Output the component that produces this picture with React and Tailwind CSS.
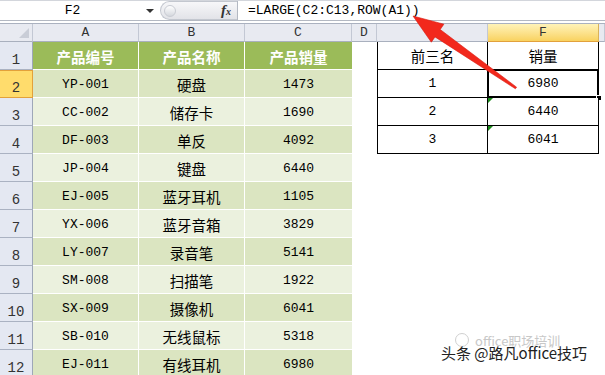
import React from "react";

const data = [
  ["YP-001", "硬盘", "1473"],
  ["CC-002", "储存卡", "1690"],
  ["DF-003", "单反", "4092"],
  ["JP-004", "键盘", "6440"],
  ["EJ-005", "蓝牙耳机", "1105"],
  ["YX-006", "蓝牙音箱", "3829"],
  ["LY-007", "录音笔", "5141"],
  ["SM-008", "扫描笔", "1922"],
  ["SX-009", "摄像机", "6041"],
  ["SB-010", "无线鼠标", "5318"],
  ["EJ-011", "有线耳机", "6980"],
];

const right = [
  ["前三名", "销量"],
  ["1", "6980"],
  ["2", "6440"],
  ["3", "6041"],
];

const isCJK = (s) => /[\u4e00-\u9fff]/.test(s);

function Txt({ children, bold, white }) {
  const cjk = isCJK(children);
  return (
    <span
      className={
        (cjk
          ? "font-['Noto_Sans_CJK_SC',sans-serif] text-[14.5px] leading-[18px] "
          : "font-['Liberation_Mono',monospace] text-[13px] leading-[16px] ") +
        (bold ? "font-bold " : "") +
        (white ? "text-white" : "text-black")
      }
    >
      {children}
    </span>
  );
}

function ColHead({ label, selected }) {
  return (
    <div
      className={
        "flex items-center justify-center border-r border-b text-[13px] leading-none text-[#333] " +
        (selected
          ? "bg-gradient-to-b from-[#fff3b8] to-[#f9d25e] border-b-[#e2a13c] border-r-[#d9b25a]"
          : "bg-[#e8eaf1] border-r-[#c3c8d4] border-b-[#a9b0be]")
      }
    >
      {label}
    </div>
  );
}

function RowHead({ n, selected }) {
  return (
    <div
      className={
        "flex items-end justify-center text-[14px] leading-[17px] text-[#333] border-b border-r " +
        (selected
          ? "bg-[#ffdc6c] border-[#e3a13a] border-t border-t-[#e3a13a]"
          : "bg-[#e4e8f2] border-b-[#aab2c2] border-r-[#9ea7b8]")
      }
    >
      {n}
    </div>
  );
}

export default function App() {
  const cells = [];
  // header row
  cells.push(
    <div key="corner" className="relative bg-[#e8eaf1] border-r border-b border-r-[#c3c8d4] border-b-[#a9b0be]">
      <svg className="absolute right-[3px] bottom-[3px]" width="10" height="10">
        <polygon points="10,0 10,10 0,10" fill="#c9cdd7" />
      </svg>
    </div>
  );
  ["A", "B", "C", "D", "E", "F"].forEach((l) =>
    cells.push(<ColHead key={"h" + l} label={l} selected={l === "F"} />)
  );
  cells.push(<ColHead key="hG" label="" />);

  for (let r = 1; r <= 12; r++) {
    cells.push(<RowHead key={"r" + r} n={r} selected={r === 2} />);
    const vals = r === 1 ? ["产品编号", "产品名称", "产品销量"] : data[r - 2];
    vals.forEach((v, i) => {
      const bg = r === 1 ? "bg-[#9bbb59]" : r % 2 === 0 ? "bg-[#dbe5c1]" : "bg-[#ebf1de]";
      cells.push(
        <div
          key={r + "-" + i}
          className={
            "flex items-center justify-center pt-[2px] border-b border-white " +
            (i < 2 ? "border-r " : "") +
            bg
          }
        >
          <Txt bold={r === 1} white={r === 1}>
            {v}
          </Txt>
        </div>
      );
    });
    cells.push(<div key={"d" + r} className="bg-white" />);
    if (r <= 4) {
      const rv = right[r - 1];
      cells.push(
        <div
          key={"e" + r}
          className="flex items-center justify-center pt-[1px] border-l border-r border-b border-black bg-white"
        >
          <Txt>{rv[0]}</Txt>
        </div>
      );
      cells.push(
        <div
          key={"f" + r}
          className="relative flex items-center justify-center pt-[1px] border-r border-b border-black bg-white"
        >
          <Txt>{rv[1]}</Txt>
          {r === 2 && (
            <>
              <div className="absolute left-[-1px] top-[-1px] right-[-1px] bottom-[-1px] border-2 border-black" />
              <div className="absolute right-[-4px] bottom-[-4px] h-[6px] w-[6px] bg-black border border-white" />
            </>
          )}
          {(r === 3 || r === 4) && (
            <svg className="absolute left-0 top-0" width="5" height="5">
              <polygon points="0,0 5,0 0,5" fill="#1a8a1a" />
            </svg>
          )}
        </div>
      );
    } else {
      cells.push(<div key={"e" + r} className="bg-white" />);
      cells.push(<div key={"f" + r} className="bg-white" />);
    }
    cells.push(<div key={"g" + r} className="bg-white" />);
  }

  return (
    <div className="relative h-[375px] w-[605px] overflow-hidden bg-white font-['Liberation_Mono',monospace] text-black">
      {/* formula bar */}
      <div className="flex h-[21px] border-t border-[#d3d6dc] bg-[#eef0f3]">
        <div className="flex w-[160px] items-center bg-white border-b border-[#b3b8c2]">
          <span className="w-[145px] text-center text-[13px] leading-none text-black">F2</span>
          <svg width="8" height="5" className="ml-[1px] mt-[2px]">
            <polygon points="0,0 8,0 4,4" fill="#333" />
          </svg>
        </div>
        <div className="flex w-[77px] items-center border-b border-[#b3b8c2] bg-white">
          <div className="flex h-[19px] w-full items-center rounded-l-full border border-r-0 border-[#c3c7cf] bg-gradient-to-b from-[#f7f7f9] to-[#e2e3e8]">
            <div className="ml-[3px] h-[12px] w-[12px] rounded-full border border-[#c9ccd3] bg-gradient-to-b from-white to-[#d5d8de]" />
            <span className="ml-auto mr-[6px] font-['Liberation_Serif',serif] text-[15px] italic font-bold leading-none text-[#333]">
              f<span className="text-[10px]">x</span>
            </span>
          </div>
        </div>
        <div className="flex flex-1 items-center border-l border-b border-[#b3b8c2] bg-white pl-[10px] text-[13px] leading-none text-black">
          =LARGE(C2:C13,ROW(A1))
        </div>
      </div>
      <div className="h-[3px] border-b border-[#aab1bf] bg-white" />

      {/* sheet grid */}
      <div className="grid grid-cols-[33px_106px_106px_107px_25px_111px_111px_6px] grid-rows-[18px_repeat(12,28px)]">
        {cells}
      </div>

      {/* red arrow */}
      <svg className="pointer-events-none absolute left-0 top-0" width="605" height="375">
        <polygon
          points="413,16 443.9,24.2 440.2,29.5 516.6,87.2 515.4,88.8 435,36.9 431.3,42.2"
          fill="#f2281c"
          stroke="#d81b10"
          strokeWidth="0.6"
        />
      </svg>

      {/* watermark */}
      <div className="pointer-events-none absolute left-[455px] top-[333px] flex items-center gap-[6px] text-[#c8c8c8]">
        <div className="h-[14px] w-[14px] rounded-full border border-[#d0d0d0]" />
        <span className="font-['Noto_Sans_CJK_SC',sans-serif] text-[13px] leading-none">office职场培训</span>
      </div>
      <div className="pointer-events-none absolute left-[441px] top-[344px] font-['Noto_Sans_CJK_SC',sans-serif] text-[15px] leading-[18px] text-[#222] [text-shadow:0_0_2px_#fff,0_0_2px_#fff]">
        头条 @路凡office技巧
      </div>
    </div>
  );
}
